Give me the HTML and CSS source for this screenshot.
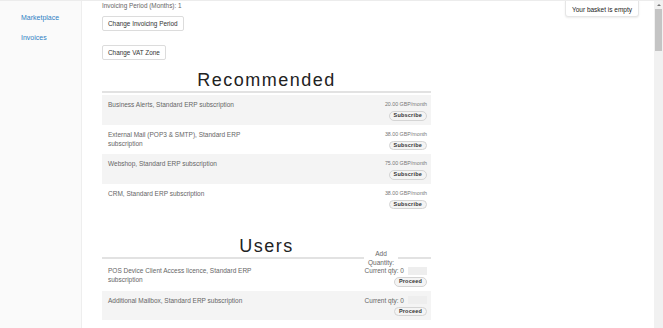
FILE: index.html
```html
<!DOCTYPE html>
<html>
<head>
<meta charset="utf-8">
<link rel="stylesheet" href="styles.css">
</head>
<body>
<div class="layout">
  <nav class="sidebar">
    <a class="nav-link" href="#">Marketplace</a>
    <a class="nav-link" href="#">Invoices</a>
  </nav>
  <main class="main">
    <div class="info">Invoicing Period (Months): 1</div>
    <button class="btn btn-first">Change Invoicing Period</button>
    <button class="btn btn-second">Change VAT Zone</button>

    <h2 class="section-title">Recommended</h2>
    <div class="rows">
      <div class="row shaded">
        <div class="name">Business Alerts, Standard ERP subscription</div>
        <div class="side"><div class="price">20.00 GBP/month</div><button class="pill">Subscribe</button></div>
      </div>
      <div class="row">
        <div class="name">External Mail (POP3 &amp; SMTP), Standard ERP subscription</div>
        <div class="side"><div class="price">38.00 GBP/month</div><button class="pill">Subscribe</button></div>
      </div>
      <div class="row shaded">
        <div class="name">Webshop, Standard ERP subscription</div>
        <div class="side"><div class="price">75.00 GBP/month</div><button class="pill">Subscribe</button></div>
      </div>
      <div class="row">
        <div class="name">CRM, Standard ERP subscription</div>
        <div class="side"><div class="price">38.00 GBP/month</div><button class="pill">Subscribe</button></div>
      </div>
    </div>

    <div class="users-head">
      <h2 class="section-title users-title">Users</h2>
      <div class="qty-label">Add<br>Quantity:</div>
    </div>
    <div class="rows">
      <div class="row">
        <div class="name">POS Device Client Access licence, Standard ERP subscription</div>
        <div class="side"><div class="qty">Current qty: 0<span class="qty-input"></span></div><button class="pill">Proceed</button></div>
      </div>
      <div class="row shaded">
        <div class="name">Additional Mailbox, Standard ERP subscription</div>
        <div class="side"><div class="qty">Current qty: 0<span class="qty-input"></span></div><button class="pill">Proceed</button></div>
      </div>
    </div>
  </main>
</div>
<div class="basket">Your basket is empty</div>
<div class="scrollbar"><div class="scroll-arrow"></div><div class="scroll-thumb"></div></div>
</body>
</html>
```
FILE: styles.css
```css
html, body {
  margin: 0;
  padding: 0;
  height: 328px;
  overflow: hidden;
  background: #fff;
}
body {
  font-family: "Liberation Sans", Arial, sans-serif;
  border-top: 1px solid #ececec;
  box-sizing: border-box;
  position: relative;
}
.layout {
  display: flex;
  height: 327px;
}
.sidebar {
  border-right: 1px solid #eeeeee;
  background: #fafafa;
  display: flex;
  flex-direction: column;
  gap: 10px;
  padding: 12px 0 0 21px;
  box-sizing: border-box;
  flex-shrink: 0;
  width: 82px;
}
.nav-link {
  color: #2f7fc4;
  text-decoration: none;
  font-size: 7px;
  line-height: 10px;
}
.main {
  margin-left: 20px;
  width: 329px;
  display: flex;
  flex-direction: column;
  align-items: flex-start;
}
.info {
  font-size: 6.4px;
  line-height: 9px;
  color: #666;
}
.btn {
  font-family: "Liberation Sans", Arial, sans-serif;
  font-size: 6.4px;
  line-height: 13px;
  padding: 0 5px;
  border: 1px solid #dcdcdc;
  border-radius: 2px;
  background: #fff;
  color: #333;
  margin: 0;
}
.btn-first { margin-top: 6px; }
.btn-second { margin-top: 14px; }
.section-title {
  align-self: stretch;
  margin: 10px 0 0 0;
  font-size: 18px;
  line-height: 21px;
  font-weight: normal;
  letter-spacing: 1.5px;
  color: #222;
  text-align: center;
  border-bottom: 2px solid #e2e2e2;
}
.rows {
  align-self: stretch;
  margin-top: 2px;
  display: flex;
  flex-direction: column;
}
.row {
  display: flex;
  justify-content: space-between;
  align-items: flex-start;
  padding: 5px 4px 4px 6px;
  background: #fff;
}
.row.shaded { background: #f4f4f4; }
.name {
  width: 155px;
  font-size: 6.5px;
  line-height: 9px;
  color: #666;
}
.side {
  display: flex;
  flex-direction: column;
  align-items: flex-end;
}
.price {
  font-size: 5.3px;
  line-height: 9px;
  color: #777;
}
.pill {
  margin: 2px 0 0 0;
  font-family: "Liberation Sans", Arial, sans-serif;
  font-size: 5.5px;
  font-weight: bold;
  letter-spacing: 0.2px;
  line-height: 7.5px;
  padding: 0 4px;
  border: 1px solid #d4d4d4;
  border-radius: 5px;
  background: #f4f4f4;
  color: #333;
}
.users-head {
  align-self: stretch;
  position: relative;
  margin-top: 22px;
}
.users-title {
  margin-top: 0;
  line-height: 22px;
}
.qty-label {
  position: absolute;
  left: 262px;
  top: 14px;
  width: 34px;
  background: #fff;
  text-align: center;
  font-size: 6.5px;
  line-height: 9px;
  color: #666;
  z-index: 2;
}
.qty {
  font-size: 6.5px;
  line-height: 9px;
  color: #666;
  display: flex;
  align-items: center;
}
.qty-input {
  display: inline-block;
  width: 19px;
  height: 8px;
  margin-left: 4px;
  background: #eeeeee;
}
.basket {
  position: absolute;
  top: -1px;
  left: 565px;
  width: 74px;
  height: 17px;
  box-sizing: border-box;
  border: 1px solid #e6e6e6;
  border-radius: 0 0 3px 3px;
  box-shadow: 0 1px 2px rgba(0,0,0,0.08);
  background: #fff;
  font-size: 6.5px;
  line-height: 17px;
  text-align: center;
  color: #222;
}
.scrollbar {
  position: absolute;
  top: -1px;
  right: 0;
  width: 9px;
  height: 328px;
  background: #f1f1f1;
}
.scroll-arrow {
  margin: 4px auto 0;
  width: 0;
  height: 0;
  border-left: 2px solid transparent;
  border-right: 2px solid transparent;
  border-bottom: 2px solid #777;
}
.scroll-thumb {
  margin: 3px 1px 0;
  height: 42px;
  background: #c4c4c4;
}
```
